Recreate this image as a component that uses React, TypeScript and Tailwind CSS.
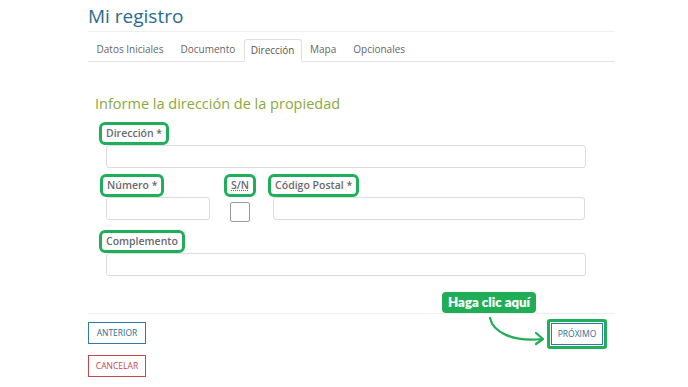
import { useState } from "react";

const tabs = ["Datos Iniciales", "Documento", "Dirección", "Mapa", "Opcionales"];

function Highlight({ children, className = "" }: { children: React.ReactNode; className?: string }) {
  return (
    <span
      className={`flex h-[23px] items-center rounded-[6px] border-[3px] border-[#1fae5a] px-[4px] text-[10.5px] font-semibold leading-none text-[#6a6a6a] ${className}`}
    >
      {children}
    </span>
  );
}

function Field({ className = "" }: { className?: string }) {
  return <div className={`h-[23px] rounded-[3px] border border-[#dcdcdc] bg-white ${className}`} />;
}

export default function App() {
  const [active] = useState("Dirección");

  return (
    <div className="h-[387px] w-[688px] overflow-hidden bg-white font-['Open_Sans',sans-serif]">
      <div className="ml-[88px] w-[527px]">
        <h1 className="pt-[4px] text-[19px] leading-[24px] text-[#2b6c8c]">Mi registro</h1>
        <div className="mt-[3px] border-t border-[#eeeeee]" />

        <div className="mt-[7px] flex h-[23px] items-end border-b border-[#e4e4e4] text-[10px] text-[#666]">
          {tabs.map((t) => (
            <div
              key={t}
              className={
                t === active
                  ? "-mb-px flex h-[23px] items-center rounded-t-[3px] border border-b-white border-[#e0e0e0] bg-white px-[6px] text-[#555]"
                  : "flex h-[23px] items-center px-[8.5px]"
              }
            >
              {t}
            </div>
          ))}
        </div>

        <div className="pl-[7px] pt-[33px]">
          <h2 className="text-[14.5px] leading-[18px] text-[#8aa83e]">Informe la dirección de la propiedad</h2>

          <div className="mt-[9px] flex flex-col">
            <div className="flex pl-[4px]">
              <Highlight>Dirección *</Highlight>
            </div>
            <Field className="ml-[11px] w-[480px]" />
          </div>

          <div className="mt-[6px] flex items-start">
            <div className="flex flex-col">
              <div className="flex pl-[5px]">
                <Highlight>Número *</Highlight>
              </div>
              <Field className="ml-[11px] w-[104px]" />
            </div>
            <div className="ml-[14px] flex flex-col items-center">
              <Highlight className="px-[2px] underline decoration-dotted">S/N</Highlight>
              <div className="mt-[5px] h-[20px] w-[20px] rounded-[2px] border border-[#9a9a9a] bg-white" />
            </div>
            <div className="ml-[12px] flex flex-col">
              <div className="flex">
                <Highlight>Código Postal *</Highlight>
              </div>
              <Field className="ml-[5px] w-[312px]" />
            </div>
          </div>

          <div className="mt-[8px] flex flex-col">
            <div className="flex pl-[4px]">
              <Highlight>Complemento</Highlight>
            </div>
            <Field className="ml-[11px] w-[480px]" />
          </div>
        </div>

        <div className="mt-[37px] border-t border-[#eeeeee]" />

        <div className="relative">
          <div className="absolute left-[354px] top-[-22px] flex h-[21px] items-center rounded-[4px] bg-[#1fae55] px-[6px] font-['Lato',sans-serif] text-[13.2px] font-extrabold text-white">
            Haga clic aquí
          </div>
          <svg className="absolute left-[398px] top-[3px]" width="64" height="30" viewBox="0 0 64 30" fill="none">
            <path d="M4 1 C 7 15, 26 25, 56 22" stroke="#1fae55" strokeWidth="2.2" strokeLinecap="round" />
            <path d="M50 16 L 57 22 L 50 27" stroke="#1fae55" strokeWidth="2.2" strokeLinecap="round" strokeLinejoin="round" />
          </svg>

          <div className="flex items-start justify-between pt-[8px]">
            <div className="flex flex-col gap-[11px]">
              <button className="flex h-[22px] w-[58px] items-center justify-center border-[1.5px] border-[#2f7aa6] text-[8.5px] text-[#2f6d95]">
                ANTERIOR
              </button>
              <button className="flex h-[22px] w-[58px] items-center justify-center border-[1.5px] border-[#c9474b] text-[8.5px] text-[#c9474b]">
                CANCELAR
              </button>
            </div>
            <div className="mr-[8px] mt-[-3px] rounded-[3px] border-[3px] border-[#1fae5a] p-[1px]">
              <button className="flex h-[22px] w-[52px] items-center justify-center border-[1.5px] border-[#2f7aa6] text-[8.5px] text-[#2f6d95]">
                PRÓXIMO
              </button>
            </div>
          </div>
        </div>
      </div>
    </div>
  );
}
